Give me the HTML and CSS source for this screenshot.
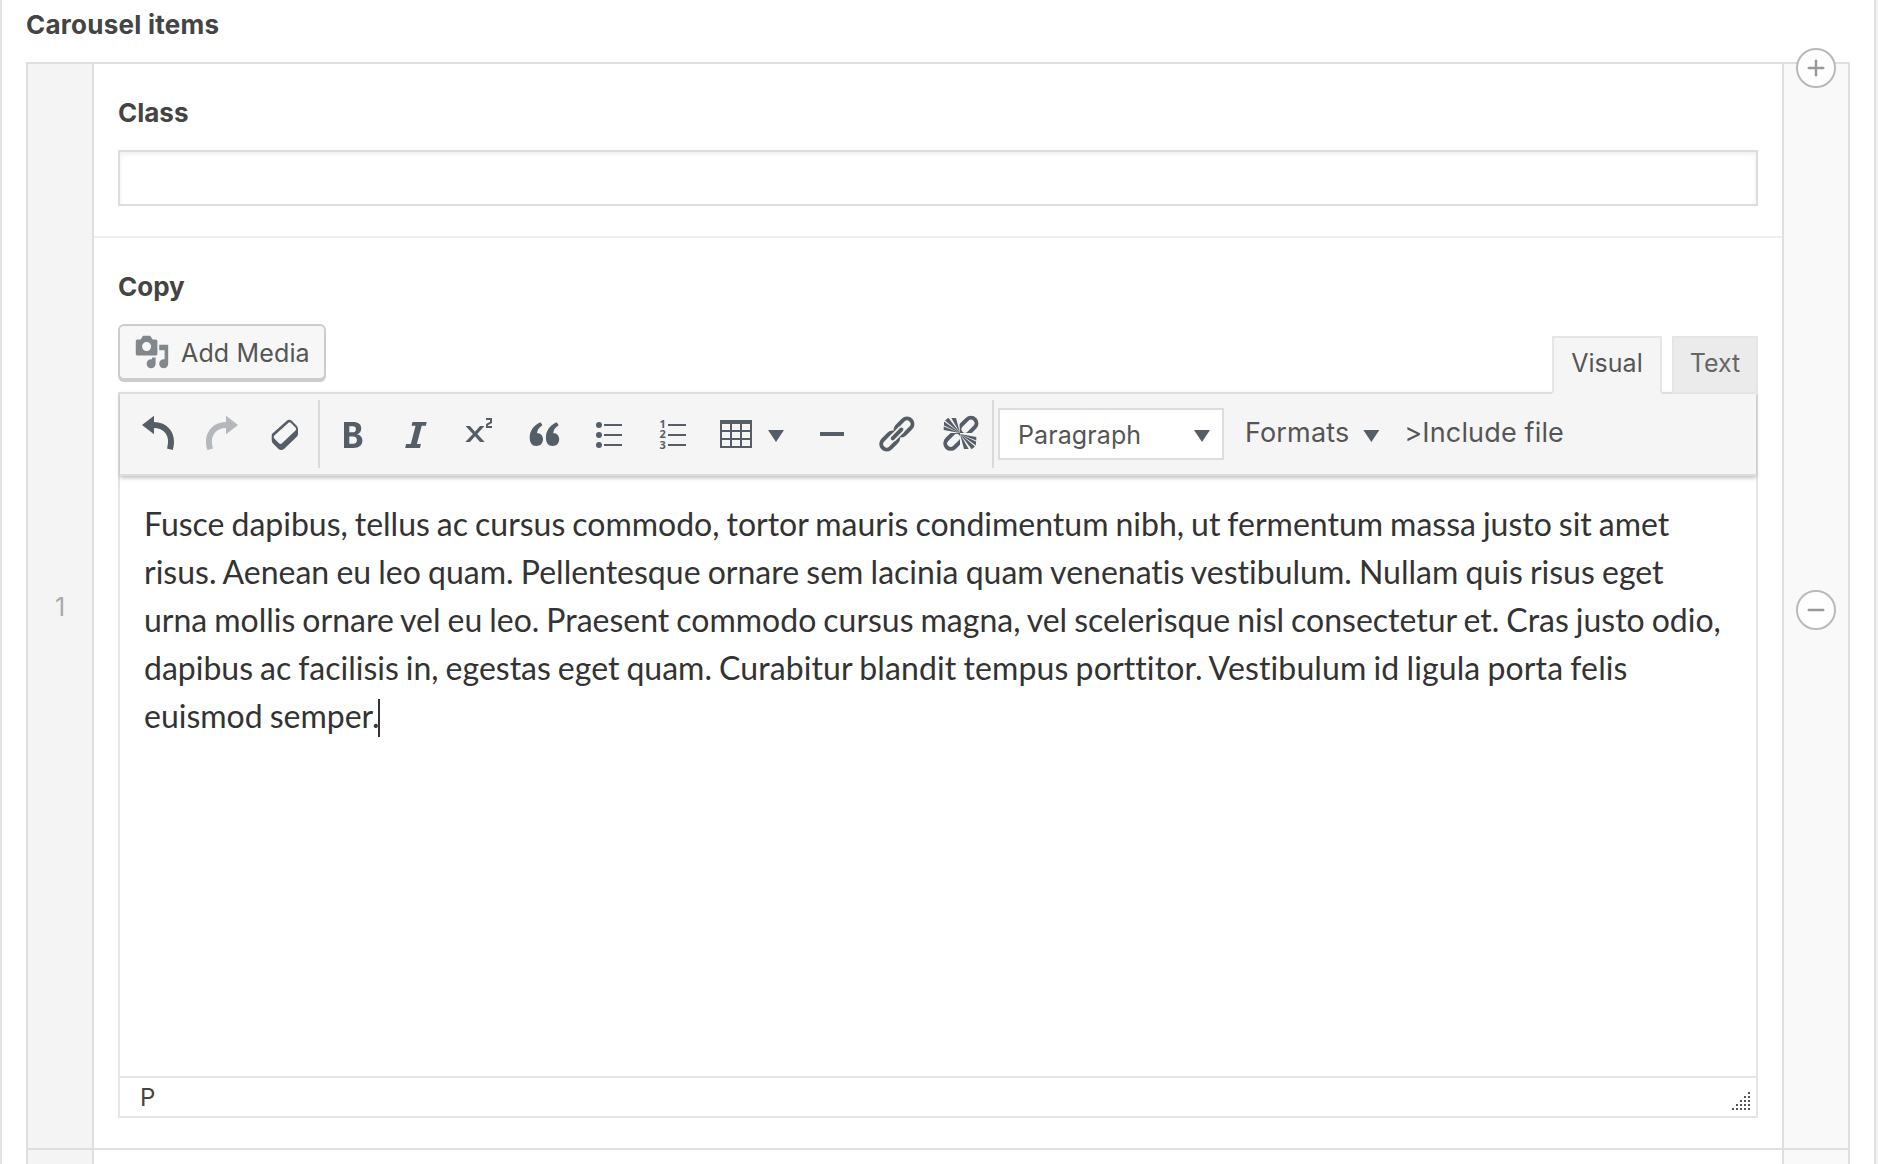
FILE: index.html
```html
<!DOCTYPE html>
<html lang="en">
<head>
<meta charset="utf-8">
<title>Carousel items</title>
<link rel="stylesheet" href="styles.css">
</head>
<body>
<main class="postbox">
  <h2 class="label label-main">Carousel items</h2>
  <div class="repeater">
    <button class="round add" aria-label="Add row"><svg viewBox="0 0 40 40"><path d="M12.800 20h14.400M20 12.800v14.400"/></svg></button>
    <div class="row">
      <div class="handle">1</div>
      <div class="fields">
        <section class="field">
          <label class="label" for="cls">Class</label>
          <input class="input" id="cls" type="text">
        </section>
        <section class="field field-copy">
          <span class="label">Copy</span>
          <div class="tools">
            <button class="media">
              <svg viewBox="0 0 20 20"><path d="M13 11V4c0-.55-.45-1-1-1h-1.67L9 1H5L3.67 3H2c-.55 0-1 .45-1 1v7c0 .55.45 1 1 1h10c.55 0 1-.45 1-1zM7 4.5c1.38 0 2.5 1.12 2.5 2.5S8.38 9.5 7 9.5 4.5 8.38 4.5 7 5.62 4.5 7 4.5zM14 6h5v10.5c0 1.38-1.12 2.5-2.5 2.5S14 17.88 14 16.5s1.12-2.5 2.5-2.5c.17 0 .34.02.5.05V9h-3V6zm-4 8.05V13h2v3.5c0 1.38-1.12 2.5-2.5 2.5S7 17.88 7 16.5 8.12 14 9.5 14c.17 0 .34.02.5.05z"/></svg>
              <span>Add Media</span>
            </button>
            <div class="tabs">
              <button class="tab active">Visual</button>
              <button class="tab">Text</button>
            </div>
          </div>
          <div class="editor">
            <div class="toolbar">
              <div class="group">
                <button class="tool"><svg viewBox="0 0 40 40"><path d="M4 11 16 1.7V8C28 8 36 16.500 36 27.500C36 30.500 35.500 33.500 34.700 36L29 34.500C31 28 30.200 23 27.500 19.300C24.500 15.500 20.500 14 16 14V20.300Z"/></svg></button>
                <button class="tool off"><svg viewBox="0 0 40 40"><path d="M36 11 24 1.7V8C12 8 4 16.500 4 27.500C4 30.500 4.500 33.500 5.300 36L11 34.500C9 28 9.800 23 12.500 19.300C15.500 15.500 19.500 14 24 14V20.300Z"/></svg></button>
                <button class="tool"><svg viewBox="0 0 40 40"><path fill-rule="evenodd" d="M20.500 7Q23.500 4.500 26 7L30.500 11.500Q32 13 32 15V20Q32 21.500 31 22.500L18 35Q15 37 12.500 35L7 29.500Q5.700 28 5.700 26V21Q5.700 20 7 19ZM22.200 9Q23.500 7.700 25 9L29.500 13.500Q31 15 29.500 16.500L16 29.300Q14.500 30.500 13 29.300L8.300 24.500Q7 23 8.300 21.600Z"/></svg></button>
              </div>
              <div class="group">
                <button class="tool"><svg viewBox="0 0 40 40"><path fill-rule="evenodd" d="M12 8H21C26.500 8 29.200 10.200 29.200 14.500C29.200 17.500 27.600 19.700 25 20.300C28.500 21 30.400 23.200 30.400 26.500C30.400 31.200 27 34 21.500 34H12ZM17.300 12.300V18.300H20.800C22.900 18.300 23.900 17.200 23.900 15.200S22.900 12.300 20.600 12.300ZM17.300 22.400V29.700H21.200C23.800 29.700 24.900 28.400 24.900 26S23.600 22.400 21 22.400Z"/></svg></button>
                <button class="tool"><svg viewBox="0 0 40 40"><path d="M16.500 8H30.700L29.800 11.700H25.700L20.900 30H24.900L24 34H9.200L10.100 30H14.800L19.600 11.700H15.600Z"/></svg></button>
                <button class="tool"><svg viewBox="0 0 40 40"><path d="M5.500 12H10L15 17.800 20 12H24.500L17.200 20 24.700 28H20L15 22.200 10 28H5.300L12.900 20Z"/><path class="line" d="M26 5h5v3.500l-4 2V13h5"/></svg></button>
                <button class="tool"><svg viewBox="0 0 40 40"><path id="q" d="M16.500 8.300 18.500 11.300C15 13.500 13.200 16 13 19.200C16.500 18.800 19 21.500 19 25.300C19 29.500 16 32 12.500 32C8 32 5.700 28.500 5.700 23.500C5.700 17 9.500 11.500 16.500 8.300Z"/><use href="#q" x="16.200"/></svg></button>
                <button class="tool"><svg viewBox="0 0 40 40"><circle cx="11" cy="11" r="3"/><circle cx="11" cy="21" r="3"/><circle cx="11" cy="31" r="3"/><path class="line" d="M16 11h18M16 21h18M16 31h18"/></svg></button>
                <button class="tool"><svg viewBox="0 0 40 40"><g class="nums"><text x="7.500" y="14">1</text><text x="7.500" y="24.300">2</text><text x="7.500" y="34.500">3</text></g><path class="line" d="M16 11h18M16 21h18M16 31h18"/></svg></button>
                <button class="tool wide"><svg viewBox="0 0 40 40"><path fill-rule="evenodd" d="M4 6H36V34H4ZM6 10V16H14V10ZM16 10V16H24V10ZM26 10V16H34V10ZM6 18V24H14V18ZM16 18V24H24V18ZM26 18V24H34V18ZM6 26V32H14V26ZM16 26V32H24V26ZM26 26V32H34V26Z"/></svg><i class="caret"></i></button>
                <button class="tool"><svg viewBox="0 0 40 40"><path d="M8 18h24v4H8z"/></svg></button>
                <button class="tool"><svg viewBox="0 0 40 40"><g class="ring"><rect x="18.300" y="7.500" width="19.400" height="11" rx="5.500" transform="rotate(-45 28 13)"/><rect x="4" y="21.500" width="19.400" height="11" rx="5.500" transform="rotate(-45 13.700 27)"/></g><path class="halo" d="M16.200 24.800 25.800 15.200"/><path class="bar" d="M16.700 24.300 25.300 15.700"/></svg></button>
                <button class="tool"><svg viewBox="0 0 40 40"><g class="ring"><rect x="18.300" y="6.700" width="19.400" height="11" rx="5.500" transform="rotate(-45 28 12.200)"/><rect x="4" y="20.900" width="19.400" height="11" rx="5.500" transform="rotate(-45 13.700 26.400)"/></g><path class="gap" d="M20 19 2 19V2H19ZM20 19 38 19V37H20Z"/><path id="rays" d="M20 19 11.300 4H16ZM20 19 5 6.500 8.300 3.800ZM20 19 4 11.500V7.500ZM20 19 3.700 16V12.500Z"/><use href="#rays" transform="rotate(180 20 19.500)"/></svg></button>
              </div>
              <div class="group last">
                <button class="select"><span>Paragraph</span><i class="caret"></i></button>
                <button class="textbtn formats"><span>Formats</span><i class="caret"></i></button>
                <button class="textbtn"><span>&gt;Include file</span></button>
              </div>
            </div>
            <div class="content">
              <p>Fusce dapibus, tellus ac cursus commodo, tortor mauris condimentum nibh, ut fermentum massa justo sit amet<br><span class="loose">risus. Aenean eu leo quam. Pellentesque ornare sem lacinia quam venenatis vestibulum. Nullam quis risus eget</span><br>urna mollis ornare vel eu leo. Praesent commodo cursus magna, vel scelerisque nisl consectetur et. Cras justo odio,<br>dapibus ac facilisis in, egestas eget quam. <span class="looser">Curabitur blandit tempus porttitor. Vestibulum id ligula porta felis</span><br>euismod semper.<i class="cursor"></i></p>
            </div>
            <div class="status"><span>P</span>
              <svg viewBox="0 0 18 18"><path d="M16 0h2v2h-2zM12 4h2v2h-2zM16 4h2v2h-2zM8 8h2v2H8zM12 8h2v2h-2zM16 8h2v2h-2zM4 12h2v2H4zM8 12h2v2H8zM12 12h2v2h-2zM16 12h2v2h-2zM0 16h2v2H0zM4 16h2v2H4zM8 16h2v2H8zM12 16h2v2h-2zM16 16h2v2h-2z"/></svg>
            </div>
          </div>
        </section>
      </div>
      <div class="remove"><button class="round" aria-label="Remove row"><svg viewBox="0 0 40 40"><path d="M12.800 20h14.400"/></svg></button></div>
    </div>
    <div class="row next"><div class="handle"></div><div class="fields"></div><div class="remove"></div></div>
  </div>
</main>
</body>
</html>
```
FILE: styles.css
```css
* { box-sizing: border-box; }

body {
  margin: 0;
  height: 1164px;
  overflow: hidden;
  background: #f1f1f1;
  color: #444;
  font-family: Inter, "Liberation Sans", sans-serif;
  font-size: 25px;
}

button {
  margin: 0;
  padding: 0;
  border: 0;
  background: none;
  color: inherit;
  font: inherit;
}

svg { display: block; flex: none; }

.postbox {
  display: flex;
  flex-direction: column;
  width: 1876px;
  height: 1164px;
  padding: 0 24px;
  border: solid #e2e2e2;
  border-width: 0 2px;
  background: #fff;
}

.label {
  display: block;
  margin: 0;
  font-size: 26px;
  font-weight: 700;
  line-height: 36px;
}

.label-main { height: 62px; padding-top: 7px; letter-spacing: .25px; }

.repeater {
  position: relative;
  flex: 1;
  width: 1824px;
  border: solid #dfdfdf;
  border-width: 2px 2px 0;
}

.row { display: flex; height: 1086px; border-bottom: 2px solid #dfdfdf; }
.row.next { height: 14px; border: 0; }

.handle, .remove { display: flex; align-items: center; justify-content: center; }
.handle { width: 66px; padding-top: 2px; border-right: 2px solid #dfdfdf; background: #f4f4f4; color: #aaa; }
.remove { width: 66px; border-left: 2px solid #dfdfdf; background: #f9f9f9; padding-top: 8px; }
.fields { width: 1688px; }

.round {
  display: block;
  width: 40px;
  height: 40px;
  border: 2px solid #b9b9b9;
  border-radius: 50%;
  background: #fff;
}
.round svg { width: 40px; height: 40px; margin: -2px; fill: none; stroke: #999; stroke-width: 2.5; stroke-linecap: round; }
.add { position: absolute; top: -16px; right: 12px; }

.field { height: 174px; padding: 31px 24px 0; border-bottom: 2px solid #eee; }
.field-copy { height: auto; border: 0; }

.input {
  display: block;
  width: 100%;
  height: 56px;
  margin-top: 19px;
  border: 2px solid #ddd;
  background: #fff;
  box-shadow: inset 0 2px 4px rgba(0, 0, 0, .07);
}

.tools { position: relative; z-index: 1; display: flex; justify-content: space-between; height: 70px; margin: 19px 0 -2px; }

.media {
  display: flex;
  align-items: center;
  gap: 11px;
  width: 208px;
  height: 56px;
  padding-left: 14px;
  border: 2px solid #ccc;
  border-radius: 6px;
  background: #f7f7f7;
  box-shadow: 0 2px 0 #ccc;
  color: #555;
}
.media svg { width: 36px; height: 36px; fill: #82878c; }
.media span { padding-top: 2px; letter-spacing: .15px; }

.tabs { display: flex; align-items: flex-end; gap: 10px; }
.tab {
  width: 86px;
  height: 58px;
  padding-bottom: 4px;
  border: 2px solid #e5e5e5;
  background: #ebebeb;
  color: #666;
}
.tab.active { width: 110px; border-bottom-color: #f5f5f5; background: #f5f5f5; color: #555; }

.editor { height: 726px; border: 2px solid #e5e5e5; display: flex; flex-direction: column; }

.toolbar {
  display: flex;
  align-items: center;
  height: 84px;
  margin-top: -2px;
  padding-left: 6px;
  border: solid #ddd;
  border-width: 2px 0;
  background: #f5f5f5;
  box-shadow: 0 2px 4px rgba(0, 0, 0, .25);
}

.group { display: flex; align-items: center; height: 68px; border-right: 2px solid #d9d9d9; }
.group.last { border: 0; padding-left: 4px; }

.tool { display: flex; align-items: center; justify-content: center; width: 64px; height: 68px; color: #555d66; }
.tool svg { width: 40px; height: 40px; fill: currentColor; }
.tool.off { opacity: .4; }
.tool.wide { width: 96px; justify-content: flex-start; gap: 12px; padding-left: 12px; }
.line { fill: none; stroke: currentColor; stroke-width: 2; }
.nums { font: bold 11px "Open Sans", sans-serif; }
.ring { fill: none; stroke: currentColor; stroke-width: 4; }
.halo { stroke: #f5f5f5; stroke-width: 7.5; }
.bar { stroke: currentColor; stroke-width: 4; stroke-linecap: round; }
.gap { fill: #f5f5f5; }

.caret { width: 16px; height: 12px; margin-top: 4px; background: #555d66; clip-path: polygon(0 0, 100% 0, 50% 100%); }

.select {
  display: flex;
  align-items: center;
  justify-content: space-between;
  width: 226px;
  height: 52px;
  padding: 0 12px 0 18px;
  border: 2px solid #ddd;
  background: #fff;
  color: #555;
}
.select span { padding-top: 2px; letter-spacing: .1px; }
.textbtn { display: flex; align-items: center; height: 68px; color: #555; font-size: 27px; }
.textbtn span { padding-bottom: 4px; letter-spacing: .15px; }
.formats { padding: 0 25px 0 21px; gap: 14px; }

.content { flex: 1; padding: 24px; color: #333; }
.content p {
  margin: 0;
  font: 32px/48px Lato, sans-serif;
  font-variant-ligatures: none;
  word-spacing: -1.2px;
  white-space: nowrap;
}
.loose { word-spacing: -1px; }
.looser { letter-spacing: .12px; }
.cursor { display: inline-block; width: 2px; height: 38px; margin-left: -2px; background: #333; vertical-align: -9px; }

.status {
  display: flex;
  align-items: center;
  justify-content: space-between;
  height: 40px;
  padding: 0 6px 0 20px;
  border-top: 2px solid #e5e5e5;
  font-size: 24px;
}
.status svg { width: 18px; height: 18px; margin-top: 8px; fill: #555; }
```
